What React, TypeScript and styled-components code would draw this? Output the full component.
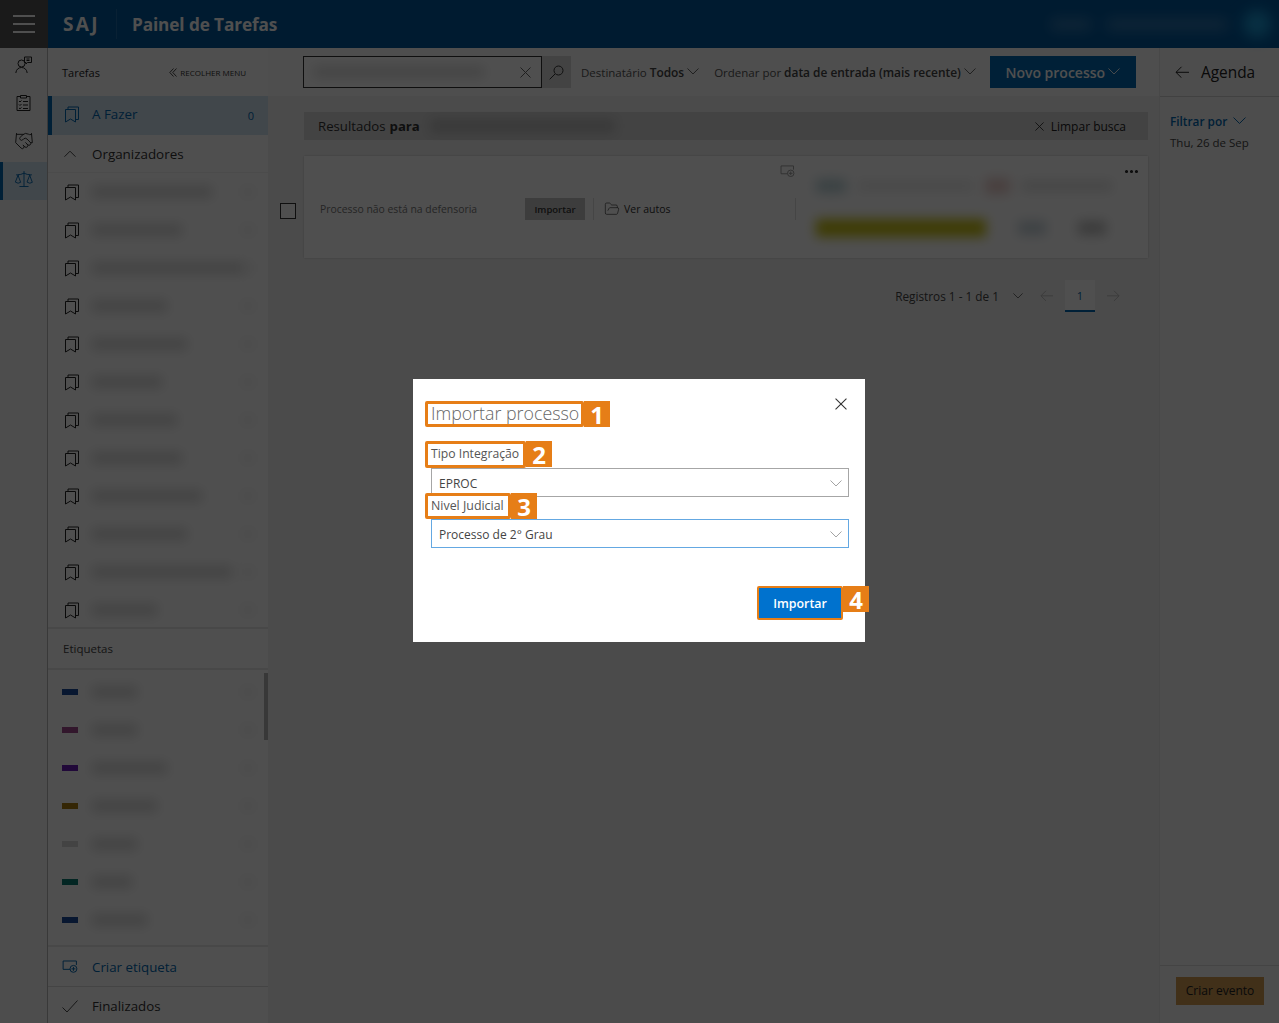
import styled, { createGlobalStyle } from "styled-components";
import { Ellipsis, FolderOpen, Handshake, Scale } from "lucide-react";

const GlobalStyle = createGlobalStyle`
  html, body {
    margin: 0;
    height: 100%;
    overflow: hidden;
  }
  body {
    font-family: "Open Sans", "Liberation Sans", sans-serif;
    color: #333;
  }
  * {
    box-sizing: border-box;
  }
`;

const Page = styled.div`
  position: relative;
  width: 1279px;
  height: 1023px;
  display: flex;
  flex-direction: column;
  overflow: hidden;
  background: #f2f2f2;
`;

const Header = styled.header`
  height: 48px;
  flex: none;
  display: flex;
  align-items: center;
  background: #00579b;
  color: #fff;
`;

const Burger = styled.div`
  width: 48px;
  height: 48px;
  display: flex;
  flex-direction: column;
  justify-content: center;
  gap: 6px;
  padding: 0 13px;
  background: #545454;
  span {
    height: 2px;
    background: #fff;
  }
`;

const Brand = styled.div`
  width: 69px;
  height: 30px;
  padding-left: 15px;
  border-right: 1px solid rgba(255, 255, 255, 0.12);
  font-size: 19px;
  font-weight: 700;
  letter-spacing: 2.4px;
  line-height: 30px;
`;

const AppTitle = styled.div`
  margin-left: 15px;
  font-size: 17.2px;
  font-weight: 700;
  letter-spacing: -0.1px;
`;

const HeaderUser = styled.div`
  margin-left: auto;
  display: flex;
  align-items: center;
  gap: 16px;
  padding-right: 8px;
  filter: blur(7px);
`;

const UserText = styled.span<{ $w: number }>`
  width: ${(p) => p.$w}px;
  height: 11px;
  background: rgba(255, 255, 255, 0.22);
`;

const Avatar = styled.span`
  width: 28px;
  height: 28px;
  border-radius: 50%;
  background: #1b9ad6;
`;

const Body = styled.div`
  flex: 1;
  display: flex;
  min-height: 0;
`;

const Rail = styled.nav`
  width: 48px;
  flex: none;
  display: flex;
  flex-direction: column;
  background: #f8f8f8;
  border-right: 1px solid #b8b8b8;
`;

const RailItem = styled.div<{ $active?: boolean }>`
  height: 38px;
  display: flex;
  align-items: center;
  justify-content: center;
  padding-bottom: 4px;
  color: ${(p) => (p.$active ? "#0067b0" : "#222")};
  background: ${(p) => (p.$active ? "#d2e4f2" : "transparent")};
  box-shadow: ${(p) => (p.$active ? "inset 3px 0 0 #0067b0" : "none")};
`;

const Sidebar = styled.aside`
  width: 220px;
  flex: none;
  display: flex;
  flex-direction: column;
  background: #fff;
`;

const SideTop = styled.div`
  height: 48px;
  flex: none;
  display: flex;
  align-items: center;
  justify-content: space-between;
  padding: 0 22px 0 14px;
  font-size: 11px;
  color: #222;
`;

const Collapse = styled.span`
  display: flex;
  align-items: center;
  gap: 3px;
  font-size: 8px;
  color: #333;
`;

const TodoRow = styled.div`
  height: 39px;
  flex: none;
  display: flex;
  align-items: center;
  padding: 0 14px 3px 12px;
  border-left: 4px solid #0067b0;
  background: #d2e4f2;
  color: #0067b0;
  font-size: 13.4px;
  span:last-child {
    margin-left: auto;
    padding-top: 3px;
    font-size: 11px;
  }
`;

const IconSlot = styled.span`
  width: 28px;
  flex: none;
  display: flex;
  align-items: center;
`;

const SectionRow = styled.div`
  height: 38px;
  flex: none;
  display: flex;
  align-items: center;
  padding-left: 16px;
  font-size: 13.4px;
  color: #333;
  border-bottom: 1px solid #f2f2f2;
`;

const OrganizerList = styled.div`
  flex: none;
  height: 456px;
  overflow: hidden;
  border-bottom: 2px solid #e8e8e8;
`;

const ListRow = styled.div`
  height: 38px;
  display: flex;
  align-items: center;
  padding-left: 16px;
  color: #222;
`;

const Blurred = styled.span<{ $w: number; $h?: number }>`
  display: block;
  width: ${(p) => p.$w}px;
  height: ${(p) => p.$h ?? 12}px;
  background: rgba(0, 0, 0, 0.15);
  filter: blur(6px);
`;

const Count = styled(Blurred)`
  margin-left: auto;
  margin-right: 14px;
  background: rgba(0, 0, 0, 0.05);
`;

const LabelsTitle = styled.div`
  height: 41px;
  flex: none;
  display: flex;
  align-items: center;
  padding-left: 15px;
  font-size: 11.5px;
  color: #444;
  border-bottom: 2px solid #e8e8e8;
`;

const TagList = styled.div`
  position: relative;
  flex: none;
  height: 277px;
  padding-top: 3px;
  border-bottom: 2px solid #e8e8e8;
`;

const TagRow = styled.div`
  height: 38px;
  display: flex;
  align-items: center;
  padding-left: 14px;
`;

const TagSwatch = styled.span<{ $color: string }>`
  width: 16px;
  height: 6px;
  margin-right: 14px;
  flex: none;
  background: ${(p) => p.$color};
`;

const ScrollThumb = styled.span`
  position: absolute;
  right: 0;
  top: 3px;
  width: 4px;
  height: 67px;
  background: #b4b4b4;
`;

const FootRow = styled.div<{ $blue?: boolean }>`
  height: 39px;
  flex: none;
  display: flex;
  align-items: center;
  padding-left: 14px;
  font-size: 13.3px;
  color: ${(p) => (p.$blue ? "#0067b0" : "#333")};
  & + & {
    border-top: 1px solid #dcdcdc;
  }
  ${IconSlot} {
    width: 30px;
  }
`;

const Main = styled.main`
  flex: 1;
  min-width: 0;
  display: flex;
  flex-direction: column;
`;

const Toolbar = styled.div`
  height: 48px;
  flex: none;
  display: flex;
  align-items: center;
  padding-left: 35px;
  background: #fafafa;
  font-size: 11.5px;
  color: #555;
`;

const SearchBox = styled.div`
  width: 239px;
  height: 32px;
  display: flex;
  align-items: center;
  justify-content: space-between;
  padding: 0 10px;
  border: 1px solid #333;
  background: #fff;
  color: #666;
`;

const SearchButton = styled.div`
  width: 29px;
  height: 32px;
  display: flex;
  align-items: center;
  justify-content: center;
  background: #d8d8d8;
  color: #333;
`;

const SortItem = styled.span<{ $gap: number }>`
  display: flex;
  align-items: center;
  gap: 3px;
  margin-left: ${(p) => p.$gap}px;
  white-space: nowrap;
  b {
    font-size: 11.9px;
    font-weight: 600;
    color: #444;
  }
`;

const PrimaryButton = styled.div`
  width: 146px;
  height: 32px;
  margin-left: 14px;
  display: flex;
  align-items: center;
  justify-content: center;
  gap: 3px;
  background: #0067b0;
  color: #fff;
  font-size: 14px;
  font-weight: 600;
`;

const Content = styled.div`
  flex: 1;
  padding: 16px 11px 0 12px;
`;

const ResultBar = styled.div`
  height: 28px;
  margin-left: 24px;
  display: flex;
  align-items: center;
  padding: 0 22px 0 14px;
  background: #d8d8d8;
  font-size: 13.2px;
  color: #333;
  b {
    font-weight: 700;
    margin-left: 4px;
    margin-right: 10px;
  }
`;

const ClearSearch = styled.span`
  margin-left: auto;
  display: flex;
  align-items: center;
  gap: 7px;
  font-size: 12px;
  color: #222;
`;

const ResultRow = styled.div`
  display: flex;
  align-items: center;
  gap: 8px;
  margin-top: 16px;
`;

const Checkbox = styled.span`
  width: 16px;
  height: 16px;
  flex: none;
  margin-top: 8px;
  border: 1px solid #333;
  background: #fff;
`;

const Card = styled.div`
  position: relative;
  flex: 1;
  height: 102px;
  display: flex;
  align-items: center;
  padding: 4px 0 0 16px;
  background: #fff;
  box-shadow: 0 0 2px rgba(0, 0, 0, 0.2);
`;

const CardNote = styled.span`
  width: 205px;
  flex: none;
  font-size: 10.4px;
  color: #777;
`;

const SmallButton = styled.span`
  width: 60px;
  height: 22px;
  flex: none;
  display: flex;
  align-items: center;
  justify-content: center;
  background: #c4c4c4;
  color: #333;
  font-size: 9.5px;
  font-weight: 600;
`;

const Divider = styled.span<{ $left: number; $right: number }>`
  width: 1px;
  height: 22px;
  flex: none;
  margin: 0 ${(p) => p.$right}px 0 ${(p) => p.$left}px;
  background: #ddd;
`;

const OpenFiles = styled.span`
  width: 191px;
  flex: none;
  display: flex;
  align-items: center;
  gap: 4px;
  font-size: 10.5px;
  color: #333;
`;

const CardBlur = styled.div`
  display: flex;
  flex-direction: column;
  gap: 25px;
  width: 296px;
  margin-top: -4px;
`;

const BlurLine = styled.div<{ $gap: number }>`
  display: flex;
  align-items: center;
  gap: ${(p) => p.$gap}px;
`;

const BlurBlock = styled.span<{ $w: number; $h: number; $color: string }>`
  width: ${(p) => p.$w}px;
  height: ${(p) => p.$h}px;
  flex: none;
  background: ${(p) => p.$color};
  filter: blur(6px);
`;

const CornerAction = styled.span<{ $right: number; $top: number; $muted?: boolean }>`
  position: absolute;
  right: ${(p) => p.$right}px;
  top: ${(p) => p.$top}px;
  display: flex;
  color: ${(p) => (p.$muted ? "#999" : "#222")};
`;

const Pager = styled.div`
  display: flex;
  align-items: center;
  justify-content: flex-end;
  height: 32px;
  margin-top: 22px;
  padding-right: 28px;
  font-size: 11.8px;
  color: #444;
`;

const PagerIcon = styled.span<{ $gap: number; $muted?: boolean }>`
  display: flex;
  margin-left: ${(p) => p.$gap}px;
  color: ${(p) => (p.$muted ? "#bbb" : "#444")};
`;

const PageNumber = styled.span`
  width: 30px;
  height: 32px;
  margin-left: 12px;
  display: flex;
  align-items: center;
  justify-content: center;
  background: #fff;
  border-bottom: 2px solid #0067b0;
  color: #0067b0;
  font-size: 11px;
`;

const Agenda = styled.aside`
  width: 120px;
  flex: none;
  display: flex;
  flex-direction: column;
  background: #f8f8f8;
  border-left: 1px solid #e8e8e8;
`;

const AgendaTop = styled.div`
  height: 49px;
  flex: none;
  display: flex;
  align-items: center;
  gap: 12px;
  padding-left: 15px;
  font-size: 15.4px;
  color: #222;
  border-bottom: 1px solid #d0d0d0;
`;

const AgendaBody = styled.div`
  flex: 1;
  padding: 15px 0 0 10px;
  font-size: 11.5px;
`;

const FilterBy = styled.div`
  display: flex;
  align-items: center;
  gap: 6px;
  height: 18px;
  font-size: 11.8px;
  color: #0067b0;
  font-weight: 600;
`;

const AgendaDate = styled.div`
  margin-top: 5px;
  color: #444;
`;

const AgendaFoot = styled.div`
  height: 58px;
  flex: none;
  display: flex;
  align-items: center;
  justify-content: flex-end;
  padding: 0 15px 8px 0;
  border-top: 1px solid #dcdcdc;
`;

const AmberButton = styled.span`
  width: 88px;
  height: 28px;
  display: flex;
  align-items: center;
  justify-content: center;
  background: #d09a50;
  color: #222;
  font-size: 12px;
`;

const Overlay = styled.div`
  position: absolute;
  inset: 0;
  display: flex;
  align-items: center;
  justify-content: center;
  padding: 0 1px 2px 0;
  background: rgba(0, 0, 0, 0.69);
`;

const Dialog = styled.section`
  position: relative;
  width: 452px;
  height: 263px;
  display: flex;
  flex-direction: column;
  padding: 22px 16px 0 12px;
  background: #fff;
  color: #555;
`;

const CloseButton = styled.span`
  position: absolute;
  top: 19px;
  right: 18px;
  display: flex;
  color: #333;
`;

const Callout = styled.div`
  display: flex;
  align-self: flex-start;
  position: relative;
  z-index: 1;
`;

const Marked = styled.div<{ $w: number; $h: number }>`
  width: ${(p) => p.$w}px;
  height: ${(p) => p.$h}px;
  display: flex;
  align-items: center;
  padding: 0 0 2px 3px;
  border: 3px solid #e67e17;
  border-radius: 2px;
  background: #fff;
  white-space: nowrap;
`;

const DialogTitle = styled.h2`
  margin: 0;
  font-size: 17.8px;
  font-weight: 300;
  color: #666;
`;

const FieldLabel = styled.label<{ $size: number }>`
  font-size: ${(p) => p.$size}px;
  color: #555;
`;

const Badge = styled.span<{ $w: number; $h: number }>`
  width: ${(p) => p.$w}px;
  height: ${(p) => p.$h}px;
  flex: none;
  display: flex;
  align-items: center;
  justify-content: center;
  background: #e67e17;
  color: #fff;
  font-size: 24px;
  font-weight: 700;
`;

const Select = styled.div<{ $focus?: boolean }>`
  height: 29px;
  margin-left: 6px;
  display: flex;
  align-items: center;
  justify-content: space-between;
  padding: 2px 6px 0 7px;
  border: 1px solid ${(p) => (p.$focus ? "#64a8e2" : "#a6a6a6")};
  background: #fff;
  font-size: 12px;
  color: #444;
  svg {
    color: #999;
  }
`;

const FirstField = styled.div`
  margin-top: 14px;
`;

const SecondField = styled.div`
  margin-top: -4px;
`;

const DialogFoot = styled.div`
  display: flex;
  align-items: flex-start;
  justify-content: flex-end;
  margin-top: 38px;
  margin-right: -20px;
`;

const SubmitButton = styled.button`
  width: 86px;
  height: 34px;
  padding: 0;
  border: 2px solid #e67e17;
  border-radius: 2px;
  background: #0072ce;
  color: #fff;
  font-family: inherit;
  font-size: 12.4px;
  font-weight: 600;
`;

const Chevron = ({ w = 12, up = false }: { w?: number; up?: boolean }) => (
  <svg width={w} height={w * 0.6} viewBox="0 0 12 7.2" fill="none" stroke="currentColor" strokeWidth={0.9}>
    <path d={up ? "M.5 6.700L6 1.200l5.500 5.500" : "M.5 .5L6 6l5.500-5.500"} />
  </svg>
);

const Cross = ({ size = 11 }: { size?: number }) => (
  <svg width={size} height={size} viewBox="0 0 11 11" fill="none" stroke="currentColor" strokeWidth={1}>
    <path d="M.5 .5l10 10M10.500 .5l-10 10" />
  </svg>
);

const Arrow = ({ w = 14, right = false }: { w?: number; right?: boolean }) => (
  <svg width={w} height={w * 0.9} viewBox="0 0 14 12.600" fill="none" stroke="currentColor" strokeWidth={1}>
    <path d={right ? "M0 6.300h13M7.500 .8l5.500 5.500-5.500 5.500" : "M14 6.300H1M6.500 .8L1 6.300l5.500 5.500"} />
  </svg>
);

const DoubleLeft = () => (
  <svg width="8" height="9" viewBox="0 0 8 9" fill="none" stroke="currentColor" strokeWidth={0.9}>
    <path d="M4.500 .5L.8 4.500l3.700 4M7.500 .5L3.800 4.500l3.700 4" />
  </svg>
);

const Tick = () => (
  <svg width="16" height="13" viewBox="0 0 16 13" fill="none" stroke="currentColor" strokeWidth={0.9}>
    <path d="M.5 7.500l4.500 4.500L15.500 .5" />
  </svg>
);

const Bookmarks = () => (
  <svg width="16" height="17" viewBox="0 0 16 17" fill="none" stroke="currentColor">
    <path d="M1.500 3.500h10v12.500l-5-3-5 3z" />
    <path d="M4 3.500v-2.500h10.500v12.500h-3" />
  </svg>
);

const UserChat = () => (
  <svg width="18" height="18" viewBox="0 0 18 18" fill="none" stroke="currentColor">
    <circle cx="6.500" cy="7.500" r="3.500" />
    <path d="M0.800 17c.4-3.600 2.800-5.500 5.700-5.500s5.300 1.900 5.700 5.500" />
    <path d="M9.500 1h7v5.500h-4l-1.500 1.500v-1.500h-1.500z" />
    <path d="M11.500 3h3M11.500 4.500h3" />
  </svg>
);

const ClipboardList = () => (
  <svg width="15" height="16" viewBox="0 0 15 16" fill="none" stroke="currentColor">
    <path d="M4.500 1.500h-3.500v14h13v-14h-3.500" />
    <path d="M4.500 .5h6v2.500h-6z" />
    <path d="M3 6l1 1 1.500-1.500M3 9.500l1 1 1.500-1.500M3 13l1 .8 1.500-1.300" />
    <path d="M7 6.500h5M7 10h5M7 13.500h5" />
  </svg>
);

const LabelAdd = ({ size = 16 }: { size?: number }) => (
  <svg width={size} height={size * 0.8} viewBox="0 0 16 13" fill="none" stroke="currentColor">
    <path d="M8 9.500h-7v-8.500h13.500v4" />
    <circle cx="11.500" cy="9" r="3.500" />
    <path d="M11.500 7v4M9.500 9h4" />
  </svg>
);

const SearchGlass = () => (
  <svg width="15" height="15" viewBox="0 0 15 15" fill="none" stroke="currentColor">
    <circle cx="9.500" cy="5.500" r="4.500" />
    <path d="M6 9l-5.300 5.300" />
  </svg>
);

const organizers = [120, 90, 160, 75, 95, 70, 85, 90, 110, 95, 140, 65];

const tags = [
  { color: "#1a4a9c", width: 45 },
  { color: "#a04a8e", width: 45 },
  { color: "#6a1fb8", width: 75 },
  { color: "#a87a10", width: 65 },
  { color: "#d8d8d8", width: 45 },
  { color: "#0c7a70", width: 40 },
  { color: "#1a4a9c", width: 55 },
];

function App() {
  return (
    <>
      <GlobalStyle />
      <Page>
        <Header>
          <Burger>
            <span />
            <span />
            <span />
          </Burger>
          <Brand>SAJ</Brand>
          <AppTitle>Painel de Tarefas</AppTitle>
          <HeaderUser>
            <UserText $w={40} />
            <UserText $w={120} />
            <Avatar />
          </HeaderUser>
        </Header>
        <Body>
          <Rail>
            <RailItem>
              <UserChat />
            </RailItem>
            <RailItem>
              <ClipboardList />
            </RailItem>
            <RailItem>
              <Handshake size={20} strokeWidth={1.1} />
            </RailItem>
            <RailItem $active>
              <Scale size={20} strokeWidth={1.1} />
            </RailItem>
          </Rail>
          <Sidebar>
            <SideTop>
              <span>Tarefas</span>
              <Collapse>
                <DoubleLeft />
                RECOLHER MENU
              </Collapse>
            </SideTop>
            <TodoRow>
              <IconSlot>
                <Bookmarks />
              </IconSlot>
              <span>A Fazer</span>
              <span>0</span>
            </TodoRow>
            <SectionRow>
              <IconSlot>
                <Chevron up />
              </IconSlot>
              Organizadores
            </SectionRow>
            <OrganizerList>
              {organizers.map((width, i) => (
                <ListRow key={i}>
                  <IconSlot>
                    <Bookmarks />
                  </IconSlot>
                  <Blurred $w={width} />
                  <Count $w={12} />
                </ListRow>
              ))}
            </OrganizerList>
            <LabelsTitle>Etiquetas</LabelsTitle>
            <TagList>
              {tags.map((tag, i) => (
                <TagRow key={i}>
                  <TagSwatch $color={tag.color} />
                  <Blurred $w={tag.width} />
                  <Count $w={12} />
                </TagRow>
              ))}
              <ScrollThumb />
            </TagList>
            <FootRow $blue>
              <IconSlot>
                <LabelAdd />
              </IconSlot>
              Criar etiqueta
            </FootRow>
            <FootRow>
              <IconSlot>
                <Tick />
              </IconSlot>
              Finalizados
            </FootRow>
          </Sidebar>
          <Main>
            <Toolbar>
              <SearchBox>
                <Blurred $w={170} $h={10} />
                <Cross />
              </SearchBox>
              <SearchButton>
                <SearchGlass />
              </SearchButton>
              <SortItem $gap={10}>
                <span>
                  Destinatário <b>Todos</b>
                </span>
                <Chevron />
              </SortItem>
              <SortItem $gap={15}>
                <span>
                  Ordenar por <b>data de entrada (mais recente)</b>
                </span>
                <Chevron />
              </SortItem>
              <PrimaryButton>
                Novo processo
                <Chevron />
              </PrimaryButton>
            </Toolbar>
            <Content>
              <ResultBar>
                Resultados <b>para</b>
                <Blurred $w={185} $h={14} />
                <ClearSearch>
                  <Cross size={9} />
                  Limpar busca
                </ClearSearch>
              </ResultBar>
              <ResultRow>
                <Checkbox />
                <Card>
                  <CardNote>Processo não está na defensoria</CardNote>
                  <SmallButton>Importar</SmallButton>
                  <Divider $left={8} $right={10} />
                  <OpenFiles>
                    <FolderOpen size={16} strokeWidth={1} />
                    Ver autos
                  </OpenFiles>
                  <Divider $left={0} $right={20} />
                  <CardBlur>
                    <BlurLine $gap={12}>
                      <BlurBlock $w={30} $h={14} $color="rgba(30,110,130,.3)" />
                      <BlurBlock $w={115} $h={10} $color="rgba(0,0,0,.08)" />
                      <BlurBlock $w={25} $h={16} $color="rgba(170,50,40,.25)" />
                      <BlurBlock $w={90} $h={10} $color="rgba(0,0,0,.12)" />
                    </BlurLine>
                    <BlurLine $gap={32}>
                      <BlurBlock $w={170} $h={18} $color="#c8c010" />
                      <BlurBlock $w={28} $h={14} $color="rgba(30,80,110,.25)" />
                      <BlurBlock $w={28} $h={14} $color="rgba(0,0,0,.25)" />
                    </BlurLine>
                  </CardBlur>
                  <CornerAction $right={353} $top={9} $muted>
                    <LabelAdd size={15} />
                  </CornerAction>
                  <CornerAction $right={8} $top={7}>
                    <Ellipsis size={17} strokeWidth={2.4} />
                  </CornerAction>
                </Card>
              </ResultRow>
              <Pager>
                Registros 1 - 1 de 1
                <PagerIcon $gap={14}>
                  <Chevron w={10} />
                </PagerIcon>
                <PagerIcon $gap={17} $muted>
                  <Arrow w={13} />
                </PagerIcon>
                <PageNumber>1</PageNumber>
                <PagerIcon $gap={12} $muted>
                  <Arrow w={13} right />
                </PagerIcon>
              </Pager>
            </Content>
          </Main>
          <Agenda>
            <AgendaTop>
              <Arrow />
              Agenda
            </AgendaTop>
            <AgendaBody>
              <FilterBy>
                Filtrar por
                <Chevron w={13} />
              </FilterBy>
              <AgendaDate>Thu, 26 de Sep</AgendaDate>
            </AgendaBody>
            <AgendaFoot>
              <AmberButton>Criar evento</AmberButton>
            </AgendaFoot>
          </Agenda>
        </Body>
        <Overlay>
          <Dialog>
            <CloseButton>
              <Cross size={12} />
            </CloseButton>
            <Callout>
              <Marked $w={159} $h={26}>
                <DialogTitle>Importar processo</DialogTitle>
              </Marked>
              <Badge $w={26} $h={26}>1</Badge>
            </Callout>
            <FirstField>
              <Callout>
                <Marked $w={101} $h={27}>
                  <FieldLabel $size={12.2}>Tipo Integração</FieldLabel>
                </Marked>
                <Badge $w={26} $h={26}>2</Badge>
              </Callout>
              <Select>
                EPROC
                <Chevron />
              </Select>
            </FirstField>
            <SecondField>
              <Callout>
                <Marked $w={86} $h={26}>
                  <FieldLabel $size={12.4}>Nivel Judicial</FieldLabel>
                </Marked>
                <Badge $w={26} $h={26}>3</Badge>
              </Callout>
              <Select $focus>
                Processo de 2° Grau
                <Chevron />
              </Select>
            </SecondField>
            <DialogFoot>
              <SubmitButton>Importar</SubmitButton>
              <Badge $w={26} $h={26}>4</Badge>
            </DialogFoot>
          </Dialog>
        </Overlay>
      </Page>
    </>
  );
}

export default App;
